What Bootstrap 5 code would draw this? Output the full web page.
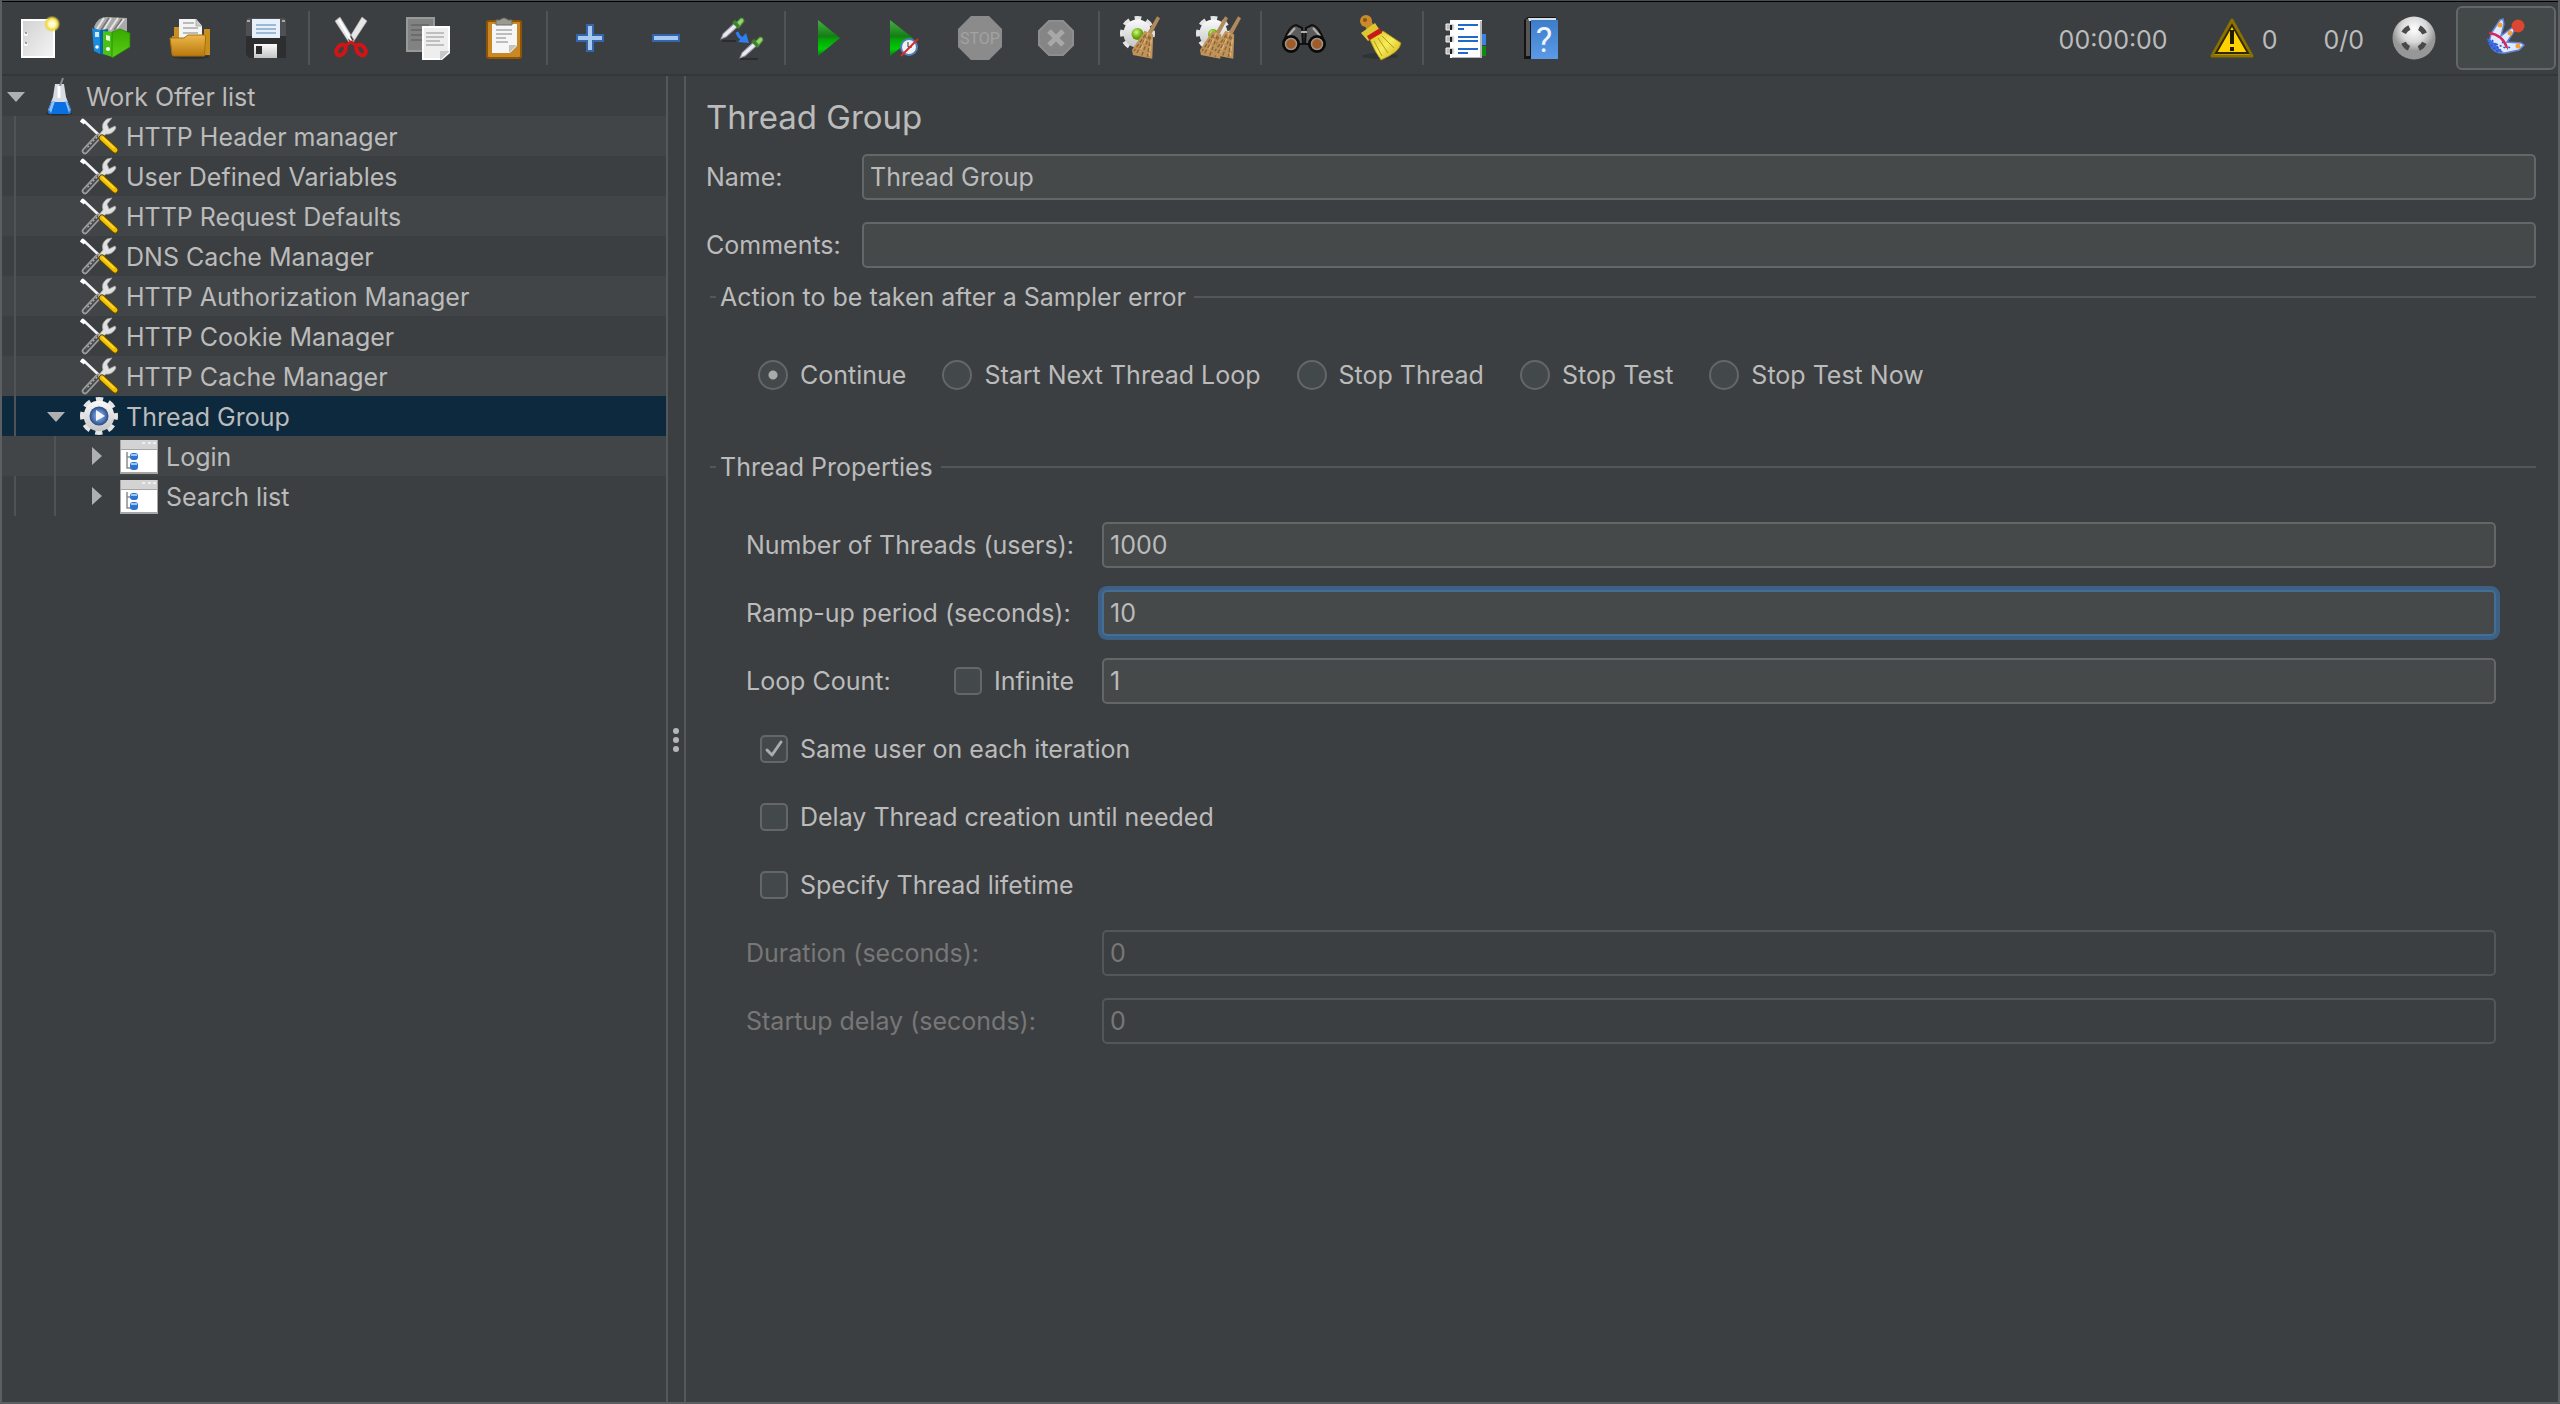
<!DOCTYPE html>
<html lang="en">
<head>
<meta charset="utf-8">
<meta name="viewport" content="width=device-width, initial-scale=1">
<title>Thread Group</title>
<link href="https://cdn.jsdelivr.net/npm/bootstrap@5.3.0/dist/css/bootstrap.min.css" rel="stylesheet">
<style>
:root{--ink:#bbbbbb;--base:#3c3f41;--stripe:#414547;--field:#45494a;--edge:#646667;--rule:#54575a}
body{background:var(--base);color:var(--ink);font:400 25px/32px Inter,"Liberation Sans",sans-serif}
/* window frame */
body::after{content:"";position:fixed;inset:0;border:2px solid #5c5f61;border-top:1px solid #4c4f51;pointer-events:none}
.toolbar{height:76px;border-top:2px solid #000;border-bottom:2px solid #343638;padding-right:4px}
.tool{width:76px;height:72px;padding:0;border:0;border-radius:0;display:flex;align-items:center;justify-content:center}
.tool svg,.status svg{width:44px;height:44px;display:block;overflow:visible}
.divider{width:2px;height:54px;margin:0 4px;background:#515456}
.status{height:72px}
.status span{padding-top:3px}
.warn{margin-left:42px;gap:8px;color:inherit;padding:0;font-size:25px;line-height:32px}
.ratio-text{margin-left:46px;margin-right:28px}
.remote{width:100px;height:64px;margin-left:20px;padding:0;border:2px solid #646667;border-radius:6px;background:#434849;display:flex;align-items:center;justify-content:center}
/* tree */
.side{width:668px;border-right:2px solid #55585a}
.side ul{list-style:none;margin:0;padding:0}
.kids{position:relative}
.kids::before{content:"";position:absolute;top:0;bottom:0;left:14px;width:2px;background:#505355}
.kids .kids::before{left:54px}
.node{height:40px;line-height:42px;display:flex;align-items:stretch;color:inherit;text-decoration:none}
.node:hover{color:inherit}
.level-0{padding-left:0}.level-1{padding-left:40px}.level-2{padding-left:80px}
.striped{background:var(--stripe)}
.picked{background:#0d293e}
.twist{width:32px;height:20px;flex:none;align-self:center}
.node .glyph{width:44px;height:40px;flex:none;margin:0 4px 0 6px}
.splitter{width:18px;border-right:2px solid #55585a;gap:3px}
.splitter i{width:6px;height:6px;border-radius:50%;background:#b4b6b7}
/* editor */
.editor{padding:20px 24px 20px 20px;min-width:0}
.editor h1{font-size:33px;line-height:42px;font-weight:400;margin:0 0 16px}
.fields{display:flex;flex-direction:column;gap:22px}
.field{display:flex;align-items:center;height:46px}
.cap-a{width:156px;flex:none}
.cap-b{width:356px;flex:none}
.cap-c{width:208px;flex:none}
.cap-d{width:148px;flex:none}
.form-control,.form-control:focus{height:46px;min-width:0;padding:0 6px;border:2px solid var(--edge);border-radius:5px;background:var(--field);color:var(--ink);font-size:25px;line-height:32px;box-shadow:none}
.form-control.active-field{border-color:#466d94;box-shadow:0 0 0 4px #3d6185}
.form-control:disabled{background:var(--base);border-color:var(--rule);color:#777}
.off{color:#777}
fieldset{min-width:0}
legend{float:none;display:flex;align-items:center;height:30px;font-size:25px;line-height:32px;margin:0;padding-left:4px}
legend::before{content:"";width:6px;height:2px;background:var(--rule);margin-right:4px}
legend::after{content:"";flex:1;height:2px;background:var(--rule);margin-left:8px}
.errors{margin-top:14px}
.props{margin-top:54px}
.inner{padding:40px 40px 0}
.pick{display:flex;align-items:center;gap:12px}
.pick .form-check-input{float:none;flex:none;margin:0;width:28px;height:28px;border:2px solid var(--edge);border-radius:5px;background-color:#43494a;box-shadow:none}
.pick .form-check-input[type=radio]{width:30px;height:30px;border-radius:50%}
.pick .form-check-input[type=radio]:checked{background-image:radial-gradient(circle,#a9abab 4px,transparent 5px)}
.pick .form-check-input[type=checkbox]:checked{background-image:url("data:image/svg+xml,%3Csvg xmlns='http://www.w3.org/2000/svg' viewBox='0 0 24 24'%3E%3Cpath d='M5 13l5 5L19 5' fill='none' stroke='%23a9abab' stroke-width='3' stroke-linecap='round' stroke-linejoin='round'/%3E%3C/svg%3E");background-size:24px}
.choices{padding-left:12px;gap:36px}
.ticks{padding-left:14px}
</style>
</head>
<body class="d-flex flex-column min-vh-100">

<svg width="0" height="0" class="position-absolute" aria-hidden="true">
<defs>
<linearGradient id="gPaper" x1="0" y1="0" x2="1" y2="1"><stop offset="0" stop-color="#d2d2d2"/><stop offset="1" stop-color="#f4f4f4"/></linearGradient>
<radialGradient id="gSun"><stop offset="0" stop-color="#fff"/><stop offset=".45" stop-color="#fdf6b0"/><stop offset=".7" stop-color="#f0dc3c"/><stop offset="1" stop-color="#e0d060" stop-opacity=".2"/></radialGradient>
<linearGradient id="gFold" x1="0" y1="0" x2="0" y2="1"><stop offset="0" stop-color="#edb84c"/><stop offset="1" stop-color="#b9780c"/></linearGradient>
<linearGradient id="gPlay" x1="0" y1="0" x2="0" y2="1"><stop offset="0" stop-color="#45b045"/><stop offset=".45" stop-color="#157d15"/><stop offset=".55" stop-color="#05a505"/><stop offset=".8" stop-color="#00cb08"/><stop offset="1" stop-color="#087b0c"/></linearGradient>
<linearGradient id="gGray" x1="0" y1="0" x2="0" y2="1"><stop offset="0" stop-color="#fafafa"/><stop offset="1" stop-color="#c4c4c4"/></linearGradient>
<linearGradient id="gGreen" x1="0" y1="0" x2="0" y2="1"><stop offset="0" stop-color="#38a800"/><stop offset="1" stop-color="#59cf16"/></linearGradient>
<linearGradient id="gBook" x1="0" y1="0" x2="0" y2="1"><stop offset="0" stop-color="#3c7cc8"/><stop offset="1" stop-color="#5c9ae8"/></linearGradient>
<linearGradient id="gBroom" x1="0" y1="0" x2="1" y2="1"><stop offset="0" stop-color="#d8c020"/><stop offset=".5" stop-color="#f6ec5c"/><stop offset="1" stop-color="#c8a80c"/></linearGradient>
<radialGradient id="gBall" cx=".5" cy=".3"><stop offset="0" stop-color="#fff"/><stop offset=".6" stop-color="#d8d8d8"/><stop offset="1" stop-color="#979797"/></radialGradient>
<radialGradient id="gLed" cx=".4" cy=".35"><stop offset="0" stop-color="#d8f49a"/><stop offset=".6" stop-color="#84c81e"/><stop offset="1" stop-color="#5f9a12"/></radialGradient>
<radialGradient id="gLens"><stop offset="0" stop-color="#a8c4ec"/><stop offset=".7" stop-color="#4a70b0"/><stop offset="1" stop-color="#274a86"/></radialGradient>

<symbol id="s-dropper" viewBox="0 0 24 24"><path d="M1 22l2-5 11-10 3 3L6 20z" fill="#e9eaf4" stroke="#9a9aa6"/><path d="M13 5l6 6" stroke="#3f8030" stroke-width="4"/><path d="M16 6l4-4q3 0 3 3l-4 5z" fill="#94d470" stroke="#4d8c38"/></symbol>
<symbol id="s-cog" viewBox="0 0 36 36"><circle cx="18" cy="18" r="15" fill="none" stroke="#e4e4e4" stroke-width="6" stroke-dasharray="6.500 5.281" stroke-dashoffset="3.250"/><circle cx="18" cy="18" r="14.500" fill="url(#gGray)"/></symbol>
<symbol id="s-besom" viewBox="0 0 30 44"><path d="M27 0l3 2-9 17-4-2z" fill="#b08a5c"/><path d="M14 15l9 4-1 25-20-4-1-5z" fill="#c0935a"/><path d="M17 19L6 38M19 20l-8 21M20 21l-3 21M15 19L3 36" stroke="#8c6432" stroke-width="1.4" fill="none" stroke-dasharray="4 2"/><path d="M18 17l-9 20M21 24l-2 17" stroke="#e2b47a" stroke-width="1.3" fill="none" stroke-dasharray="5 2"/></symbol>

<symbol id="i-tools" viewBox="0 0 44 40"><path d="M5 4l18 17" stroke="#f4f4f4" stroke-width="2.6" stroke-linecap="round"/><path d="M3 4l4 3" stroke="#fff" stroke-width="4"/><path d="M20 21L7 35" stroke="#9a9a9a" stroke-width="6.500" stroke-linecap="round"/><path d="M21 20L7 35" stroke="#46494b" stroke-width="3" stroke-linecap="round"/><path d="M19 21L8 33" stroke="#bdbdbd" stroke-width="1.200" stroke-dasharray="2 2"/><path d="M20 20l5-6q-2-7 4-11l5-1-5 6 2 5 6-3 1 2q-4 7-10 6l-6 5z" fill="#e2e2e2" stroke="#a8a8a8" stroke-width=".8"/><path d="M24 22l13 12" stroke="#5d4a00" stroke-width="7" stroke-linecap="round"/><path d="M24 22l13 12" stroke="#f3bd00" stroke-width="5" stroke-linecap="round"/><path d="M24 21l12 11" stroke="#ffdf40" stroke-width="1.4"/></symbol>
<symbol id="i-flask" viewBox="0 0 44 40"><ellipse cx="21" cy="37.500" rx="13" ry="2" fill="#2a2d30"/><path d="M17 8h9l2 13 5 13q0 4-3 4H13q-3 0-3-4l5-13z" fill="#d4dbe4"/><path d="M13 26h17l3 9q0 3-3 3H13q-3 0-3-3z" fill="#0a6fe0"/><path d="M11 34l3-9 3 0-4 12zM32 34l-3-9h-2l4 12z" fill="#8ec0f4"/><path d="M21 10v12" stroke="#fff" stroke-width="3"/><path d="M22 10l3-8" stroke="#8c8f91" stroke-width="2"/></symbol>
<symbol id="i-group" viewBox="0 0 44 40"><use href="#s-cog" x="2" y="1" width="38" height="38"/><circle cx="21" cy="20" r="9.500" fill="url(#gLens)"/><path d="M18 14l9 6-9 5z" fill="#f1f5fb"/></symbol>
<symbol id="i-sampler" viewBox="0 0 44 40"><path d="M2 4h38v34H2z" fill="#a6a6a6"/><path d="M3 14h36v22H3z" fill="#fff"/><path d="M3 4h36v9H3z" fill="#d3d3d3"/><path d="M24 7h3m3 0h3m2 0h3" stroke="#eee" stroke-width="2"/><path d="M9 16v16h6M9 21h6" fill="none" stroke="#8d8d8d" stroke-width="1.500"/><rect x="12" y="17" width="8" height="7" rx="3" fill="#2e75cf"/><rect x="12" y="26" width="8" height="8" rx="3" fill="#2e75cf"/><path d="M13 19h6M13 28h6" stroke="#9cc8f6" stroke-width="2"/></symbol>
</defs>
</svg>

<header class="toolbar d-flex align-items-center">
  <button class="btn tool" type="button" aria-label="New"><svg viewBox="0 0 44 44"><path d="M5 3h34v39H5z" fill="#fff"/><path d="M7 5h30v35H7z" fill="url(#gPaper)"/><circle cx="10" cy="18" r="2" fill="#fff"/><circle cx="10" cy="28" r="2" fill="#fff"/><path d="M9 16.500l2 1M9 26.500l2 1" stroke="#888" stroke-width="1.500"/><circle cx="36" cy="8" r="8" fill="url(#gSun)"/></svg></button>
  <button class="btn tool" type="button" aria-label="Templates"><svg viewBox="0 0 44 44"><path d="M2 11Q6 1 14 1l21 1v26H12z" fill="#a9a9a9"/><path d="M5 13L12 2M11 15l8-13M18 14l8-12M25 12l7-9" stroke="#e4e4e4" stroke-width="2"/><path d="M9 14l8-12M22 14l8-11" stroke="#777" stroke-width="1.500"/><path d="M0 12l8 2v24l-6-3z" fill="#1b8be0"/><path d="M8 14l8-1v26l-8-1z" fill="#0a66ac"/><path d="M3 16h4v5H3z" fill="#cfeaff"/><circle cx="5" cy="31" r="1.800" fill="#fff"/><path d="M11 15l9 1v25l-9-3z" fill="#49c213"/><path d="M20 16l8-3 10 4v14l-18 11z" fill="url(#gGreen)" stroke="#248000" stroke-width=".7"/><path d="M14 19l4 1v5l-4-1z" fill="#e4ffd8"/><circle cx="16" cy="33" r="2" fill="#fff"/></svg></button>
  <button class="btn tool" type="button" aria-label="Open"><svg viewBox="0 0 44 44"><ellipse cx="23" cy="41" rx="18" ry="2" fill="#2d3032"/><path d="M6 11h9v20H4V20h2zM36 13h6v26h-6z" fill="#c98f1e"/><path d="M11 3h17l6 7v14H11z" fill="#f4f4f4"/><path d="M28 3v7h6" fill="#ccc" stroke="#999" stroke-width=".7"/><path d="M15 7h11M15 12h15M15 17h15" stroke="#a8a8a8" stroke-width="1.500"/><path d="M2 22h14l4-3h16q2 0 1.500 3l-1 18H6q-2 0-2-2z" fill="url(#gFold)" stroke="#a8700c"/></svg></button>
  <button class="btn tool" type="button" aria-label="Save"><svg viewBox="0 0 44 44"><path d="M2 4l2-2h36l2 2v38H5l-3-3z" fill="#4e5053"/><path d="M2 20h40v22H5l-3-3z" fill="#2c2e30"/><path d="M8 3h28v19H8z" fill="#e6f1fb"/><path d="M12 9h20M12 13h20M12 17h20" stroke="#84a8c8" stroke-width="1.500"/><path d="M10 28h23v14H10z" fill="url(#gGray)"/><path d="M12 30h6v8h-6z" fill="#2b2b2b"/><path d="M3 5h3M38 5h3" stroke="#aaa" stroke-width="2"/></svg></button>
  <span class="divider"></span>
  <button class="btn tool" type="button" aria-label="Cut"><svg viewBox="0 0 44 44"><path d="M5 5l5-4 14 23-4 4zM37 5l-5-4-14 23 4 4z" fill="#e6e6e6" stroke="#aaa" stroke-width=".6"/><path d="M9 4l13 22" stroke="#fff" stroke-width="2"/><ellipse cx="11" cy="34" rx="4" ry="6" transform="rotate(38 11 34)" fill="none" stroke="#d31414" stroke-width="4"/><ellipse cx="31" cy="34" rx="4" ry="6" transform="rotate(-38 31 34)" fill="none" stroke="#d31414" stroke-width="4"/><path d="M15 30l6-4 6 4" stroke="#d31414" stroke-width="3" fill="none"/></svg></button>
  <button class="btn tool" type="button" aria-label="Copy"><svg viewBox="0 0 44 44"><path d="M0 1h29v35H0z" fill="#989a9a"/><path d="M2 3h25v31H2z" fill="#818383"/><path d="M5 9h18M5 14h16M5 19h12M5 24h12" stroke="#666" stroke-width="1.600"/><path d="M16 10h28v27l-8 7H16z" fill="#fff"/><path d="M18 12h24v23l-7 7H18z" fill="#eee"/><path d="M20 17h18M20 21h18M20 25h14M20 29h18" stroke="#b0b0b0" stroke-width="1.500"/><path d="M44 35l-10 9v-9z" fill="#c8c8c8"/></svg></button>
  <button class="btn tool" type="button" aria-label="Paste"><svg viewBox="0 0 44 44"><rect x="5" y="5" width="34" height="37" rx="2" fill="#c98725" stroke="#8c5404" stroke-width="2"/><path d="M10 8h25v22l-7 7H10z" fill="#f6f6f6"/><path d="M35 29l-8 8v-8z" fill="#c4c4c4"/><path d="M14 14h16M14 18h16M14 22h10M14 26h12" stroke="#aaa" stroke-width="1.500"/><path d="M14 4h4q4-4 8 0h4v5H14z" fill="#9a9a8e" stroke="#6c6c64"/></svg></button>
  <span class="divider"></span>
  <button class="btn tool" type="button" aria-label="Expand all"><svg viewBox="0 0 44 44"><path d="M19 9h6v10h10v6H25v10h-6V25H9v-6h10z" fill="#a8c8ee" stroke="#3466ae" stroke-width="2"/></svg></button>
  <button class="btn tool" type="button" aria-label="Collapse all"><svg viewBox="0 0 44 44"><path d="M9 19h26v6H9z" fill="#a8c8ee" stroke="#3466ae" stroke-width="2"/></svg></button>
  <button class="btn tool" type="button" aria-label="Toggle"><svg viewBox="0 0 44 44"><path d="M2 25h14M20 43h18" stroke="#25282a" stroke-width="1.500"/><use href="#s-dropper" x="0" y="0" width="25" height="25"/><use href="#s-dropper" x="19" y="19" width="25" height="25"/><path d="M17 16q2 7 8 7" stroke="#2e7ff0" stroke-width="3" fill="none"/><path d="M26 17l3 10-11-1z" fill="#2e7ff0"/></svg></button>
  <span class="divider"></span>
  <button class="btn tool" type="button" aria-label="Start"><svg viewBox="0 0 44 44"><path d="M12 4l22 18-22 18z" fill="url(#gPlay)"/></svg></button>
  <button class="btn tool" type="button" aria-label="Start no pauses"><svg viewBox="0 0 44 44"><path d="M8 4l23 18L8 40z" fill="url(#gPlay)"/><circle cx="27" cy="31" r="8" fill="#eef2f6" stroke="#4a80bc" stroke-width="2"/><path d="M26 26v5h4" fill="none" stroke="#333"/><path d="M19 40l17-17" stroke="#dc2828" stroke-width="2"/></svg></button>
  <button class="btn tool" type="button" aria-label="Stop"><svg viewBox="0 0 44 44"><path d="M13 0h18l13 13v18L31 44H13L0 31V13z" fill="#8b8b8b"/><text x="22" y="28" text-anchor="middle" font-family="Roboto,sans-serif" font-size="16" fill="#a2a2a2">STOP</text></svg></button>
  <button class="btn tool" type="button" aria-label="Shutdown"><svg viewBox="0 0 44 44"><path d="M15 5h14l10 10v14L29 39H15L5 29V15z" fill="#858585" stroke="#8e8e8e" stroke-width="2"/><path d="M15 15l14 14M29 15L15 29" stroke="#a8a8a8" stroke-width="5"/></svg></button>
  <span class="divider"></span>
  <button class="btn tool" type="button" aria-label="Clear"><svg viewBox="0 0 44 44"><use href="#s-cog" x="0" y="0" width="35" height="35"/><circle cx="17.500" cy="18" r="6" fill="url(#gLed)"/><use href="#s-besom" x="11" y="0" width="29" height="43"/></svg></button>
  <button class="btn tool" type="button" aria-label="Clear all"><svg viewBox="0 0 44 44"><use href="#s-cog" x="0" y="0" width="35" height="35"/><circle cx="17" cy="18" r="5" fill="url(#gLed)"/><use href="#s-besom" x="3" y="0" width="29" height="43"/><use href="#s-besom" x="16" y="0" width="29" height="43"/></svg></button>
  <span class="divider"></span>
  <button class="btn tool" type="button" aria-label="Search"><svg viewBox="0 0 44 44"><path d="M2 25Q7 10 14 9l6 3 1 16H2zM42 25Q37 10 30 9l-6 3-1 16h19z" fill="#5c5c5c" stroke="#111" stroke-width="2"/><path d="M6 20l7-8M38 20l-7-8M19 16h6" stroke="#b0b0b0" stroke-width="2"/><circle cx="9" cy="28" r="7.500" fill="#a05c28" stroke="#0a0a0a" stroke-width="3"/><circle cx="35" cy="28" r="7.500" fill="#a05c28" stroke="#0a0a0a" stroke-width="3"/><circle cx="9" cy="28" r="5.500" fill="none" stroke="#a09088" stroke-width="1.500"/><circle cx="35" cy="28" r="5.500" fill="none" stroke="#a09088" stroke-width="1.500"/></svg></button>
  <button class="btn tool" type="button" aria-label="Reset search"><svg viewBox="0 0 44 44"><ellipse cx="22" cy="40" rx="18" ry="3" fill="#303335"/><path d="M5 6l6 12 7-3-5-11z" fill="#c98a2c"/><circle cx="8" cy="5" r="6" fill="#c98a2c"/><circle cx="7" cy="4" r="2" fill="#8a5410"/><path d="M3 17L17 7l6 9-13 9z" fill="#dcc832"/><path d="M12 24l13-9 18 12q-1 9-20 17-6-8-11-20z" fill="url(#gBroom)" stroke="#a48c10" stroke-width=".8"/><path d="M16 25l8 15M20 22l10 15M24 20l12 12" stroke="#b89c14" stroke-width="1" fill="none"/><path d="M9 20l13-8 2 5-13 7z" fill="#c81818"/></svg></button>
  <span class="divider"></span>
  <button class="btn tool" type="button" aria-label="Function helper"><svg viewBox="0 0 44 44"><path d="M36 18h6v11h-6z" fill="#3c84e4"/><path d="M36 30h6v10h-6z" fill="#108a10"/><path d="M6 4h32v38H6z" fill="#fff"/><path d="M36 5h2v37H8v-1h28z" fill="#b8b8b8"/><path d="M14 9h20M14 13h6M14 21h20M14 25h20M14 33h20M14 37h10" stroke="#2269c8" stroke-width="2"/><g fill="#bbb" stroke="#f4f4f4"><path d="M2 8h8v6H2zM2 20h8v6H2zM2 32h8v6H2z"/></g><path d="M7 9v5M7 21v5M7 33v5" stroke="#222" stroke-width="2"/></svg></button>
  <button class="btn tool" type="button" aria-label="Help"><svg viewBox="0 0 44 44"><path d="M4 4l4-3h28v42H4z" fill="#141414"/><path d="M6 3h4v37H6z" fill="#565656"/><path d="M8 2h28v3H9z" fill="#d6e2e6"/><path d="M11 4h27v39H11z" fill="url(#gBook)"/><text x="24" y="36" text-anchor="middle" font-family="Roboto,sans-serif" font-size="35" fill="#eef4fc">?</text></svg></button>

  <div class="status d-flex align-items-center ms-auto">
    <span>00:00:00</span>
    <button class="btn warn d-flex align-items-center border-0" type="button"><svg viewBox="0 0 44 44" aria-hidden="true"><path d="M22 4L42 40H2z" fill="#e8be00" stroke="#8a7000" stroke-width="3" stroke-linejoin="round"/><path d="M22 9L38 37H6z" fill="#ffd200" stroke="#302800" stroke-width="2"/><path d="M20 14h4v14h-4zM20 31h4v4h-4z" fill="#1c1a00"/></svg><span>0</span></button>
    <span class="ratio-text">0/0</span>
    <svg viewBox="0 0 44 44" aria-hidden="true"><circle cx="22" cy="22" r="21.500" fill="url(#gBall)"/><circle cx="22" cy="22" r="11.500" fill="none" stroke="#494949" stroke-width="5" stroke-dasharray="8 10.064" stroke-dashoffset="-5.032"/></svg>
    <button class="btn remote" type="button" aria-label="Remote engines"><svg viewBox="0 0 44 44"><path d="M8 16l8-12 3-1 1 5-3 12 12-9 2 3-8 12 14 1 3 2-5 5-14 3q-12 1-15-9-1-5 2-12z" fill="#dfeaff" stroke="#5f83d8" stroke-width="1.500"/><path d="M3 22q5 2 10 8t7 6q-14 2-17-14z" fill="#3d6ce0"/><path d="M4 26l10 10M8 24l10 12M12 28l12 5M18 26l8 6" stroke="#2a52c4" stroke-width="1.500" stroke-dasharray="2 2"/><path d="M5 17q14 2 18 15" fill="none" stroke="#d4285c" stroke-width="2.500"/><circle cx="16" cy="9" r="2.500" fill="#f4a034"/><circle cx="26" cy="17" r="2.500" fill="#f4a034"/><circle cx="34" cy="30" r="2.500" fill="#f4a034"/><circle cx="34" cy="10" r="6.500" fill="#dc4632"/></svg></button>
  </div>
</header>

<div class="d-flex flex-grow-1">
  <nav class="side flex-shrink-0" aria-label="Test plan">
    <ul>
      <li><a href="#" class="node level-0"><svg class="twist" viewBox="0 0 32 20"><path d="M7 6h18l-9 10z" fill="#adafb0"/></svg><svg class="glyph" viewBox="0 0 44 40"><use href="#i-flask"/></svg>Work Offer list</a>
        <ul class="kids">
          <li><a href="#" class="node level-1 striped"><span class="twist"></span><svg class="glyph"><use href="#i-tools"/></svg>HTTP Header manager</a></li>
          <li><a href="#" class="node level-1"><span class="twist"></span><svg class="glyph"><use href="#i-tools"/></svg>User Defined Variables</a></li>
          <li><a href="#" class="node level-1 striped"><span class="twist"></span><svg class="glyph"><use href="#i-tools"/></svg>HTTP Request Defaults</a></li>
          <li><a href="#" class="node level-1"><span class="twist"></span><svg class="glyph"><use href="#i-tools"/></svg>DNS Cache Manager</a></li>
          <li><a href="#" class="node level-1 striped"><span class="twist"></span><svg class="glyph"><use href="#i-tools"/></svg>HTTP Authorization Manager</a></li>
          <li><a href="#" class="node level-1"><span class="twist"></span><svg class="glyph"><use href="#i-tools"/></svg>HTTP Cookie Manager</a></li>
          <li><a href="#" class="node level-1 striped"><span class="twist"></span><svg class="glyph"><use href="#i-tools"/></svg>HTTP Cache Manager</a></li>
          <li><a href="#" class="node level-1 picked" aria-current="true"><svg class="twist" viewBox="0 0 32 20"><path d="M7 6h18l-9 10z" fill="#adafb0"/></svg><svg class="glyph"><use href="#i-group"/></svg>Thread Group</a>
            <ul class="kids">
              <li><a href="#" class="node level-2 striped"><svg class="twist" viewBox="0 0 32 20"><path d="M12 1v18l10-9z" fill="#adafb0"/></svg><svg class="glyph"><use href="#i-sampler"/></svg>Login</a></li>
              <li><a href="#" class="node level-2"><svg class="twist" viewBox="0 0 32 20"><path d="M12 1v18l10-9z" fill="#adafb0"/></svg><svg class="glyph"><use href="#i-sampler"/></svg>Search list</a></li>
            </ul>
          </li>
        </ul>
      </li>
    </ul>
  </nav>
  <div class="splitter d-flex flex-column align-items-center justify-content-center flex-shrink-0"><i></i><i></i><i></i></div>

  <main class="editor flex-grow-1">
    <h1>Thread Group</h1>
    <form>
      <div class="fields">
        <div class="field"><label class="cap-a" for="name">Name:</label><input class="form-control" id="name" type="text" value="Thread Group"></div>
        <div class="field"><label class="cap-a" for="comments">Comments:</label><input class="form-control" id="comments" type="text"></div>
      </div>
      <fieldset class="errors">
        <legend>Action to be taken after a Sampler error</legend>
        <div class="inner">
          <div class="field choices">
            <div class="pick"><input class="form-check-input" type="radio" name="act" id="a1" checked><label for="a1">Continue</label></div>
            <div class="pick"><input class="form-check-input" type="radio" name="act" id="a2"><label for="a2">Start Next Thread Loop</label></div>
            <div class="pick"><input class="form-check-input" type="radio" name="act" id="a3"><label for="a3">Stop Thread</label></div>
            <div class="pick"><input class="form-check-input" type="radio" name="act" id="a4"><label for="a4">Stop Test</label></div>
            <div class="pick"><input class="form-check-input" type="radio" name="act" id="a5"><label for="a5">Stop Test Now</label></div>
          </div>
        </div>
      </fieldset>
      <fieldset class="props">
        <legend>Thread Properties</legend>
        <div class="inner fields">
          <div class="field"><label class="cap-b" for="threads">Number of Threads (users):</label><input class="form-control" id="threads" type="text" value="1000"></div>
          <div class="field"><label class="cap-b" for="ramp">Ramp-up period (seconds):</label><input class="form-control active-field" id="ramp" type="text" value="10"></div>
          <div class="field"><label class="cap-c" for="loops">Loop Count:</label><div class="pick cap-d"><input class="form-check-input" type="checkbox" id="inf"><label for="inf">Infinite</label></div><input class="form-control" id="loops" type="text" value="1"></div>
          <div class="field ticks"><div class="pick"><input class="form-check-input" type="checkbox" id="c1" checked><label for="c1">Same user on each iteration</label></div></div>
          <div class="field ticks"><div class="pick"><input class="form-check-input" type="checkbox" id="c2"><label for="c2">Delay Thread creation until needed</label></div></div>
          <div class="field ticks"><div class="pick"><input class="form-check-input" type="checkbox" id="c3"><label for="c3">Specify Thread lifetime</label></div></div>
          <div class="field"><label class="cap-b off" for="dur">Duration (seconds):</label><input class="form-control" id="dur" type="text" value="0" disabled></div>
          <div class="field"><label class="cap-b off" for="delay">Startup delay (seconds):</label><input class="form-control" id="delay" type="text" value="0" disabled></div>
        </div>
      </fieldset>
    </form>
  </main>
</div>
<script src="https://cdn.jsdelivr.net/npm/bootstrap@5.3.0/dist/js/bootstrap.bundle.min.js"></script>
</body>
</html>
